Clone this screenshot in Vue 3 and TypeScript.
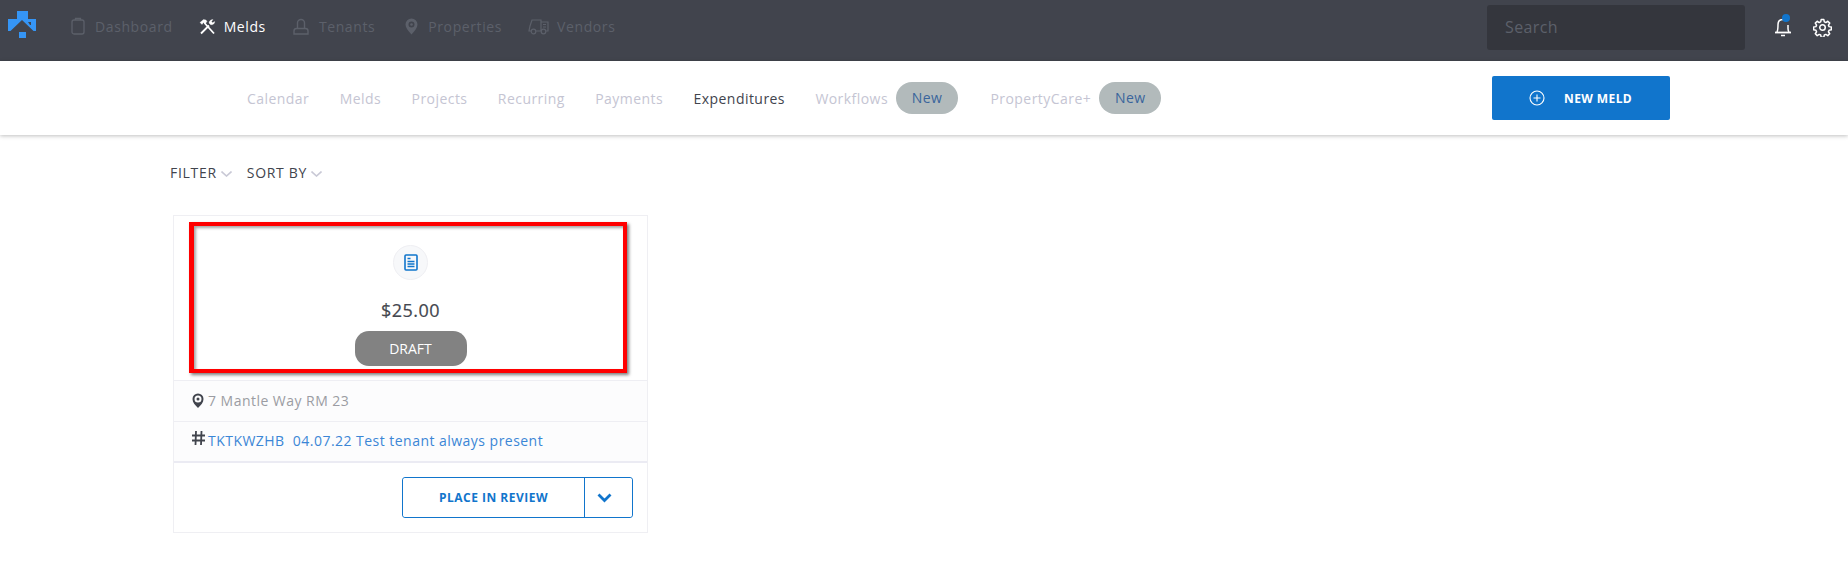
<script setup lang="ts">
const mainNav = [
  { label: 'Dashboard', icon: 'clipboard' },
  { label: 'Melds', icon: 'tools', active: true },
  { label: 'Tenants', icon: 'tenant' },
  { label: 'Properties', icon: 'pin' },
  { label: 'Vendors', icon: 'truck' },
]
const subNav = [
  { label: 'Calendar' },
  { label: 'Melds' },
  { label: 'Projects' },
  { label: 'Recurring' },
  { label: 'Payments' },
  { label: 'Expenditures', active: true },
  { label: 'Workflows', badge: 'New' },
  { label: 'PropertyCare+', badge: 'New' },
]
</script>

<template>
  <div class="page">
    <header class="topbar">
      <svg class="logo" width="28" height="27" viewBox="0 0 28 27">
        <path d="M9 0h11v8h8v12h-2.500L14 9 2.500 20H0V8h9z" fill="#3595f5" />
        <path d="M20 11h3v3h-1z" fill="#41444d" />
        <rect x="11" y="21" width="7" height="6" fill="#3595f5" />
      </svg>
      <nav class="main-nav">
        <a v-for="item in mainNav" :key="item.label" class="main-item" :class="[item.icon, { active: item.active }]">
          <svg v-if="item.icon === 'clipboard'" width="14" height="18" viewBox="0 0 14 18" fill="none" stroke="currentColor" stroke-width="1.300">
            <rect x="1" y="3" width="12" height="14" rx="2" />
            <path d="M4.500 3V1.500h5V3" />
          </svg>
          <svg v-else-if="item.icon === 'tools'" width="17" height="17" viewBox="0 0 17 17" fill="none" stroke="#fff">
            <path d="M1 4.500 4.500 1.500 7 2l1 1.500L6 6 4.500 4.500 3 6.500z" fill="#fff" stroke-width=".3" />
            <path d="M5.500 5 15 15.500" stroke-width="1.800" />
            <path d="M2 15.500 10 7.500" stroke-width="1.800" />
            <path d="M10 5c.1-2 1.800-3.500 4-3.500l-1.500 2 1 1.200 2.200-1.200c.2 2-1.700 3.700-4 3.200z" fill="#fff" stroke-width=".3" />
          </svg>
          <svg v-else-if="item.icon === 'tenant'" width="16" height="17" viewBox="0 0 16 17" fill="none" stroke="currentColor" stroke-width="1.400">
            <path d="M4.500 10.500V5a3.500 3.500 0 0 1 7 0v5.500" />
            <path d="M1 16v-3c0-1.500 1-2.500 2.500-2.500h9c1.500 0 2.500 1 2.500 2.500v3z" />
          </svg>
          <svg v-else-if="item.icon === 'pin'" width="13" height="17" viewBox="0 0 13 17">
            <path fill="currentColor" fill-rule="evenodd" d="M6.500 16.500C3 12.500.5 9.500.5 6.500a6 6 0 0 1 12 0c0 3-2.500 6-6 10zM6.500 3.500a3 3 0 1 0 0 6 3 3 0 0 0 0-6z" />
            <circle cx="6.500" cy="6.500" r="1.300" fill="currentColor" />
          </svg>
          <svg v-else width="21" height="17" viewBox="0 0 21 17" fill="none" stroke="currentColor" stroke-width="1.200">
            <path d="M3 13H1l1-5 2-6h9v11H8" />
            <path d="M13 4h7v9h-2" />
            <path d="M15 6.500h3M15 9h3" />
            <circle cx="5.500" cy="13.500" r="2.300" />
            <circle cx="15.500" cy="13.500" r="2.300" />
          </svg>
          <span>{{ item.label }}</span>
        </a>
      </nav>
      <div class="search">Search</div>
      <div class="bell">
        <svg width="18" height="20" viewBox="0 0 18 20" fill="none" stroke="#fff" stroke-width="1.500">
          <path d="M3 15c1-2 1-4 1-7.500C4 4.500 6 2.500 9 2.500" />
          <path d="M14 8v3.500c0 1.500.3 2.500 1 3.500" />
          <path d="M1 15.500h16" stroke-width="1.800" />
          <path d="M7 18.500h4" stroke-width="1.500" />
        </svg>
        <span class="dot"></span>
      </div>
      <svg class="gear" width="19" height="19" viewBox="0 0 24 24" fill="none" stroke="#fff" stroke-width="1.900" stroke-linejoin="round">
        <circle cx="12" cy="12" r="3.500" />
        <path d="M10.300 2h3.400l.6 2.900 1.900.8 2.500-1.600 2.400 2.400-1.600 2.500.8 1.900 2.900.6v3.400l-2.900.6-.8 1.900 1.600 2.500-2.400 2.400-2.500-1.600-1.900.8-.6 2.900h-3.400l-.6-2.900-1.900-.8-2.500 1.600-2.400-2.400 1.600-2.500-.8-1.900-2.900-.6v-3.400l2.900-.6.800-1.900-1.600-2.500 2.400-2.400 2.500 1.600 1.900-.8z" />
      </svg>
    </header>

    <div class="subbar">
      <nav class="sub-nav">
        <a v-for="item in subNav" :key="item.label" class="sub-item" :class="{ active: item.active }">
          <span>{{ item.label }}</span>
          <span v-if="item.badge" class="badge">{{ item.badge }}</span>
        </a>
      </nav>
      <button class="new-meld">
        <svg width="16" height="16" viewBox="0 0 16 16" fill="none" stroke="#fff" stroke-width="1.100">
          <circle cx="8" cy="8" r="7" />
          <path d="M8 4.500v7M4.500 8h7" />
        </svg>
        <span>NEW MELD</span>
      </button>
    </div>

    <main class="content">
      <div class="filters">
        <span class="filter">FILTER<svg width="11" height="6" viewBox="0 0 11 6" fill="none" stroke="#c9c9d6" stroke-width="1.600"><path d="M.5.500 5.500 5l5-4.500" /></svg></span>
        <span class="filter">SORT BY<svg width="11" height="6" viewBox="0 0 11 6" fill="none" stroke="#c9c9d6" stroke-width="1.600"><path d="M.5.500 5.500 5l5-4.500" /></svg></span>
      </div>

      <section class="card">
        <div class="card-top">
          <div class="doc-circle">
            <svg width="14" height="17" viewBox="0 0 14 17" fill="none" stroke="#1175cc">
              <rect x="1" y="1" width="12" height="15" rx="1" stroke-width="1.600" />
              <path d="M3.500 4.500h3M3.500 7.500h7M3.500 10h7M3.500 12.500h7" stroke-width="1.300" />
            </svg>
          </div>
          <div class="amount">$25.00</div>
          <div class="status">DRAFT</div>
          <div class="highlight"></div>
        </div>
        <div class="info-row address">
          <svg width="12" height="15" viewBox="0 0 12 15">
            <path fill-rule="evenodd" fill="#41444d" d="M6 15C3 12 .5 9.500.5 6a5.500 5.500 0 0 1 11 0c0 3.500-2.500 6-5.500 9zM6 2.500a3.500 3.500 0 1 0 0 7 3.500 3.500 0 0 0 0-7z" />
            <circle cx="6" cy="6" r="1.500" fill="#41444d" />
          </svg>
          <span>7 Mantle Way RM 23</span>
        </div>
        <div class="info-row ticket">
          <svg width="13" height="14" viewBox="0 0 13 14" fill="none" stroke="#41444d" stroke-width="1.800">
            <path d="M4 0 3.500 14M9.500 0 9 14M0 4.500h13M0 9.500h13" />
          </svg>
          <span>TKTKWZHB&nbsp; 04.07.22 Test tenant always present</span>
        </div>
        <div class="card-actions">
          <div class="split">
            <button class="split-main">PLACE IN REVIEW</button>
            <button class="split-toggle">
              <svg width="15" height="10" viewBox="0 0 15 10" fill="none" stroke="#1175cc" stroke-width="2.800">
                <path d="M1.500 1.500 7.500 7.500l6-6" />
              </svg>
            </button>
          </div>
        </div>
      </section>
    </main>
  </div>
</template>

<style>
html, body {
  background: #fff;
}
</style>

<style scoped>
.page {
  width: 1848px;
  height: 561px;
  overflow: hidden;
  font-family: "Open Sans", "Noto Sans", sans-serif;
  color: #41444d;
}

.topbar {
  display: flex;
  align-items: center;
  height: 61px;
  box-sizing: border-box;
  background: #41444d;
  padding: 0 16px 7px 8px;
}
.logo {
  flex: none;
  margin-top: -5px;
}
.main-nav {
  display: flex;
  align-items: center;
  margin: -2px 0 0 35px;
  flex: 1;
}
.main-item {
  display: flex;
  align-items: center;
  gap: 10px;
  font-size: 14px;
  letter-spacing: .6px;
  color: #5c606a;
  margin-right: 26px;
}
.main-item.active {
  color: #fff;
  font-weight: 500;
  gap: 8px;
  margin-right: 27px;
}
.main-item.tenant {
  gap: 10px;
  margin-right: 30px;
}
.main-item.truck { gap: 8px; }

.search {
  width: 258px;
  height: 45px;
  box-sizing: border-box;
  padding: 0 18px;
  line-height: 45px;
  background: #34363d;
  border-radius: 3px;
  font-size: 16px;
  letter-spacing: .4px;
  color: #5c606a;
}
.bell {
  position: relative;
  width: 18px;
  height: 20px;
  margin-left: 29px;
}
.dot {
  position: absolute;
  top: -3px;
  right: 2px;
  width: 8px;
  height: 8px;
  background: #1175cc;
  border-radius: 50%;
}
.gear {
  margin-left: 21px;
}

.subbar {
  display: flex;
  align-items: center;
  height: 74px;
  padding-left: 247px;
  box-shadow: 0 1px 4px rgba(0, 0, 0, .25);
}
.sub-nav {
  display: flex;
  align-items: center;
  gap: 30.4px;
  width: 1245px;
}
.sub-item {
  display: flex;
  align-items: center;
  gap: 8px;
  font-size: 14px;
  letter-spacing: .45px;
  color: #c5c5d3;
}
.sub-item:last-child {
  margin-left: 2px;
}
.sub-item.active {
  color: #41444d;
}
.badge {
  width: 62px;
  height: 32px;
  line-height: 31px;
  text-align: center;
  background: #b2babb;
  border-radius: 16px;
  color: #3a659c;
}
.new-meld {
  display: flex;
  align-items: center;
  gap: 19px;
  width: 178px;
  height: 44px;
  margin: 0;
  padding: 0 0 0 37px;
  border: 0;
  border-radius: 2px;
  background: #1175cc;
  color: #fff;
  font-family: inherit;
  font-size: 12px;
  font-weight: 700;
  letter-spacing: .4px;
}

.content {
  padding: 26px 0 0 170px;
}
.filters {
  display: flex;
  gap: 15px;
  height: 22px;
  align-items: center;
}
.filter {
  display: flex;
  align-items: center;
  gap: 4px;
  font-size: 14px;
  font-weight: 500;
  letter-spacing: .7px;
}
.filter svg {
  margin-top: 4px;
}

.card {
  width: 475px;
  height: 318px;
  box-sizing: border-box;
  margin: 32px 0 0 3px;
  border: 1px solid #efeff3;
  display: flex;
  flex-direction: column;
}
.card-top {
  position: relative;
  height: 164px;
  flex: none;
  display: flex;
  flex-direction: column;
  align-items: center;
  padding-top: 29px;
  box-sizing: border-box;
}
.doc-circle {
  display: flex;
  align-items: center;
  justify-content: center;
  width: 35px;
  height: 35px;
  box-sizing: border-box;
  border: 1px solid #efeff3;
  border-radius: 50%;
  background: #f7f8fa;
}
.amount {
  margin-top: 16px;
  height: 28px;
  line-height: 28px;
  font-size: 18px;
  font-weight: 500;
  letter-spacing: .5px;
  color: #44474f;
  -webkit-text-stroke: .2px #44474f;
}
.status {
  width: 112px;
  height: 35px;
  margin-top: 7px;
  line-height: 35px;
  text-align: center;
  background: #828282;
  border-radius: 14px;
  color: #fff;
  font-size: 14px;
}
.highlight {
  position: absolute;
  left: 15px;
  top: 6px;
  width: 438px;
  height: 151px;
  box-sizing: border-box;
  border: 4px solid #ff0000;
  border-left-width: 5px;
  box-shadow: 2px 2px 3px rgba(0, 0, 0, .5), inset 2px 2px 3px rgba(0, 0, 0, .35);
}

.info-row {
  display: flex;
  align-items: center;
  gap: 4px;
  box-sizing: border-box;
  padding: 0 0 2px 18px;
  background: #fcfcfd;
  border-top: 1px solid #eeeef3;
  font-size: 14px;
  letter-spacing: .47px;
}
.address {
  height: 41px;
  color: #9b9ca3;
}
.ticket {
  height: 40px;
  gap: 3px;
  color: #3b86d6;
}
.ticket svg {
  margin-top: -6px;
}
.card-actions {
  flex: 1;
  display: flex;
  justify-content: flex-end;
  padding: 14px 14px 0 0;
  border-top: 2px solid #ebebf3;
}
.split {
  display: flex;
  width: 231px;
  height: 41px;
  box-sizing: border-box;
  border: 1px solid #1175cc;
  border-radius: 3px;
}
.split button {
  margin: 0;
  padding: 0;
  border: 0;
  background: #fff;
  border-radius: 3px;
}
.split .split-main {
  width: 182px;
  border-right: 1px solid #1175cc;
  border-radius: 3px 0 0 3px;
  color: #1175cc;
  font-family: inherit;
  font-size: 12px;
  font-weight: 700;
  letter-spacing: .5px;
}
.split .split-toggle {
  flex: 1;
  display: flex;
  align-items: center;
  justify-content: center;
  padding-right: 9px;
}
</style>
